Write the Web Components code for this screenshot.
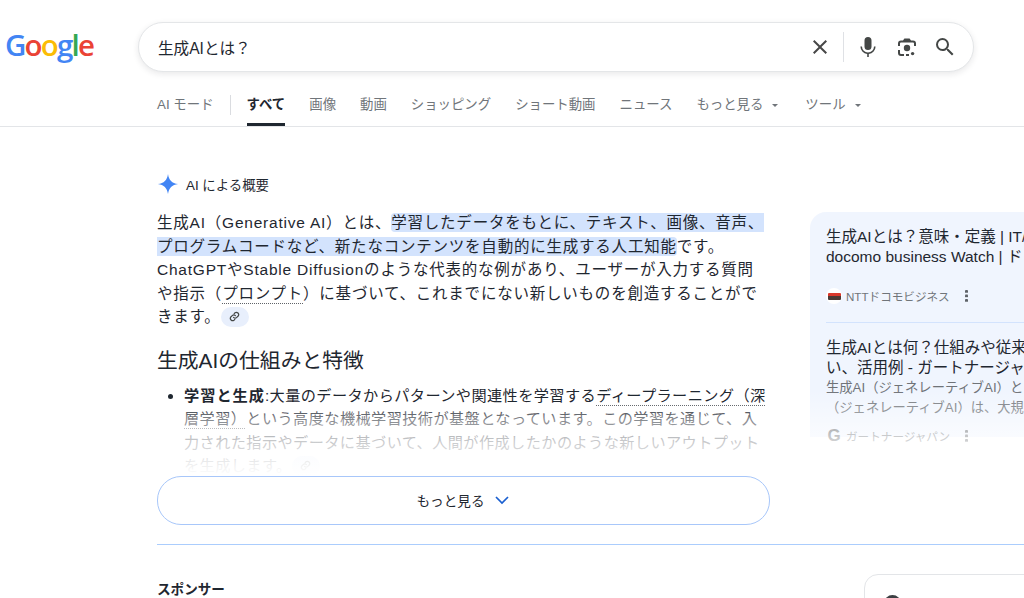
<!DOCTYPE html>
<html lang="ja">
<head>
<meta charset="utf-8">
<title>生成AIとは？</title>
<style>
  html, body { margin: 0; background: #fff; text-spacing-trim: space-all; }
  body { width: 1024px; height: 598px; overflow: hidden; font-family: "Liberation Sans", "Noto Sans CJK JP", sans-serif; color: #1f2730; }
  mark { background: #d3e3fd; color: inherit; border-radius: 4px; padding: 1px 0; }
  u { text-decoration: underline dotted #5f6368 1px; text-underline-offset: 4px; }
  li b { letter-spacing: 1px; }
</style>
</head>
<body>
<search-header query="生成AIとは？"></search-header>
<page-body>
  <ai-overview>
    <p>生成AI（Generative AI）とは、<mark>学習したデータをもとに、テキスト、画像、音声、プログラムコードなど、新たなコンテンツを自動的に生成する人工知能</mark>です。ChatGPTやStable Diffusionのような代表的な例があり、ユーザーが入力する質問や指示（<u>プロンプト</u>）に基づいて、これまでにない新しいものを創造することができます。<link-chip></link-chip></p>
    <h2>生成AIの仕組みと特徴</h2>
    <ul><li><b>学習と生成</b>:大量のデータからパターンや関連性を学習する<u>ディープラーニング（深層学習）</u>という高度な機械学習技術が基盤となっています。この学習を通じて、入力された指示やデータに基づいて、人間が作成したかのような新しいアウトプットを生成します。<link-chip></link-chip></li></ul>
  </ai-overview>
  <source-panel slot="side">
    <source-card site="NTTドコモビジネス" logo="ntt">生成AIとは？意味・定義 | IT/ICT用語集<br>docomo business Watch | ドコモビジネス</source-card>
    <source-card site="ガートナージャパン" logo="g" snippet="生成AI（ジェネレーティブAI）とは何か。<br>（ジェネレーティブAI）は、大規模なデータ">生成AIとは何？仕組みや従来のAIとの違<br>い、活用例 - ガートナージャパン</source-card>
  </source-panel>
</page-body>

<script>
const icons = {
  close: '<path d="M19 6.41 17.59 5 12 10.59 6.41 5 5 6.41 10.59 12 5 17.59 6.41 19 12 13.41 17.59 19 19 17.59 13.41 12z"/>',
  mic: '<path d="M12 15a3.5 3.5 0 0 0 3.5-3.5v-6a3.5 3.5 0 0 0-7 0v6A3.5 3.5 0 0 0 12 15z"/><path d="M18 11.5a6 6 0 0 1-12 0H4.4a7.6 7.6 0 0 0 6.8 7.5V22h1.6v-3a7.6 7.6 0 0 0 6.8-7.5z"/>',
  lens: '<circle cx="12" cy="13" r="3.2"/><circle cx="17.6" cy="18.6" r="1.7"/><path d="M9.4 3.5 8 5.5H6a3 3 0 0 0-3 3V11h2V8.5a1 1 0 0 1 1-1h12a1 1 0 0 1 1 1V11h2V8.5a3 3 0 0 0-3-3h-2l-1.4-2zM3 15v3a3 3 0 0 0 3 3h3v-2H6a1 1 0 0 1-1-1v-3zM11 19h3v2h-3z"/>',
  search: '<path d="M15.5 14h-.79l-.28-.27A6.47 6.47 0 0 0 16 9.5 6.5 6.5 0 1 0 9.5 16c1.61 0 3.09-.59 4.23-1.57l.27.28v.79l5 4.99L20.49 19l-4.99-5zm-6 0C7.01 14 5 11.99 5 9.5S7.01 5 9.5 5 14 7.01 14 9.5 11.99 14 9.5 14z"/>'
};

class SearchHeader extends HTMLElement {
  constructor() {
    super();
    this.attachShadow({ mode: "open" });
  }
  connectedCallback() {
    const q = this.getAttribute("query");
    const icon = (n, s) => `<svg width="${s}" height="${s}" viewBox="0 0 24 24" fill="currentColor">${icons[n]}</svg>`;
    this.shadowRoot.innerHTML = `
    <style>
      :host { display: block; height: 126px; border-bottom: 1px solid #e3e5e8; font-family: "Liberation Sans", "Noto Sans CJK JP", sans-serif; }
      .top { display: flex; align-items: center; height: 50px; padding: 22px 50px 0 5px; }
      .logo { width: 133px; flex: none; font: 600 29.5px/1 "Open Sans", sans-serif; letter-spacing: -1.8px; margin-top: -4px; }
      .box { flex: 1; height: 48px; border: 1px solid #e4e6e8; border-radius: 25px; display: flex; align-items: center; padding-left: 19px; box-shadow: 0 2px 6px rgba(32,33,36,.1); background: #fff; }
      .q { flex: 1; font-size: 15.6px; color: #1f2730; margin-top: -1px; }
      .ic { display: flex; align-items: center; color: #444746; }
      .x { margin-right: 11px; color: #474747; }
      .sep { width: 1px; height: 30px; background: #dfe1e5; margin-right: 12px; }
      .mic { margin-right: 15px; }
      .lens { margin-right: 14px; }
      .search { margin-right: 16px; }
      nav { display: flex; align-items: flex-start; padding-left: 157px; height: 54px; font-size: 13.4px; color: #70757a; }
      nav a { display: flex; flex-direction: column; align-items: center; height: 54px; padding-top: 23px; box-sizing: border-box; line-height: 20px; margin-right: 24px; white-space: nowrap; position: relative; }
      nav a.ai { margin-right: 16px; }
      nav i { width: 1px; height: 20px; background: #dadce0; margin: 23px 16px 0 0; }
      nav a.on { color: #1f2730; font-weight: 700; }
      nav a.on::after { content: ""; position: absolute; left: 0; right: 0; bottom: 0; height: 3px; background: #1f2730; }
      .car { display: inline-block; margin-left: 9px; border: 3px solid transparent; border-top: 3px solid #70757a; border-bottom: 0; vertical-align: 2px; }
      nav a.more { margin-right: 27px; }
    </style>
    <div class="top">
      <div class="logo"><span style="color:#4285f4">G</span><span style="color:#ea4335">o</span><span style="color:#fbbc05">o</span><span style="color:#4285f4">g</span><span style="color:#34a853">l</span><span style="color:#ea4335">e</span></div>
      <div class="box">
        <div class="q">${q}</div>
        <span class="ic x">${icon("close", 24)}</span>
        <span class="sep"></span>
        <span class="ic mic">${icon("mic", 24)}</span>
        <span class="ic lens">${icon("lens", 24)}</span>
        <span class="ic search">${icon("search", 24)}</span>
      </div>
    </div>
    <nav>
      <a class="ai">AI モード</a><i></i>
      <a class="on">すべて</a><a>画像</a><a>動画</a><a>ショッピング</a><a>ショート動画</a><a>ニュース</a>
      <a class="more"><span>もっと見る<span class="car"></span></span></a>
      <a><span>ツール<span class="car"></span></span></a>
    </nav>`;
  }
}
customElements.define("search-header", SearchHeader);

class PageBody extends HTMLElement {
  constructor() {
    super();
    this.attachShadow({ mode: "open" });
    this.shadowRoot.innerHTML = `
    <style>
      :host { display: flex; gap: 40px; padding-left: 157px; }
      .col { flex: none; width: 613px; }
      .side { flex: none; width: 214px; padding-top: 85px; }
    </style>
    <div class="col"><slot></slot></div>
    <div class="side"><slot name="side"></slot></div>`;
  }
}
customElements.define("page-body", PageBody);

class LinkChip extends HTMLElement {
  constructor() {
    super();
    this.attachShadow({ mode: "open" });
    this.shadowRoot.innerHTML = `
    <style>
      :host { display: inline-flex; align-items: center; justify-content: center; width: 28px; height: 20px; border-radius: 10px; background: #e8effc; vertical-align: 0; }
    </style>
    <svg width="11" height="11" viewBox="0 0 24 24" fill="none" stroke="#444746" stroke-width="2.6" stroke-linecap="round"><path d="M10 14a5 5 0 0 0 7 0l3-3a5 5 0 0 0-7-7l-1.5 1.5"/><path d="M14 10a5 5 0 0 0-7 0l-3 3a5 5 0 0 0 7 7l1.5-1.5"/></svg>`;
  }
}
customElements.define("link-chip", LinkChip);

class AiOverview extends HTMLElement {
  constructor() {
    super();
    this.attachShadow({ mode: "open" });
    this.shadowRoot.innerHTML = `
    <style>
      :host { display: block; font-family: "Liberation Sans", "Noto Sans CJK JP", sans-serif; color: #1f2730; }
      .head { display: flex; align-items: center; gap: 7px; height: 24px; margin-top: 45px; font-size: 13.4px; }
      .clip { position: relative; height: 265px; margin-top: 15px; overflow: hidden; }
      .clip::after { content: ""; position: absolute; left: 0; right: 0; top: 193px; height: 72px; background: linear-gradient(rgba(255,255,255,0), rgba(255,255,255,.45) 21%, rgba(255,255,255,.75) 51%, rgba(255,255,255,.93) 85%, #fff); }
      .btn { height: 47px; border: 1px solid #a8c7fa; border-radius: 24px; display: flex; align-items: center; justify-content: center; gap: 10px; font-size: 13.6px; }
      .btn span { margin-top: -1px; }
      .btn svg { margin-top: -2px; }
      .rule { height: 1px; background: #abcdfd; margin-top: 19px; width: 900px; }
      .sp { font-size: 13.6px; font-weight: 700; margin-top: 36px; line-height: 18px; }
      .ad { position: absolute; left: 864px; top: 574px; width: 200px; height: 60px; border: 1px solid #e3e5e8; border-radius: 14px; box-sizing: border-box; }
      .ad::before { content: ""; position: absolute; left: 19px; top: 20px; width: 17px; height: 17px; border-radius: 50%; background: #3c4043; }
      ::slotted(p) { margin: 0; padding-right: 1.5px; font-size: 15.5px; line-height: 23.5px; letter-spacing: .78px; }
      ::slotted(h2) { margin: 18px 0 0; font-size: 20.8px; line-height: 28px; font-weight: 400; }
      ::slotted(ul) { margin: 9px 0 0; padding: 0 0 0 27px; font-size: 15.2px; line-height: 23.5px; letter-spacing: .4px; }
    </style>
    <div class="head">
      <svg width="22" height="22" viewBox="0 0 24 24"><path fill="#4285f4" d="M12 1c.9 6.6 4.4 10.1 11 11-6.6.9-10.1 4.4-11 11-.9-6.6-4.4-10.1-11-11 6.6-.9 10.1-4.4 11-11z"/></svg>
      <span>AI による概要</span>
    </div>
    <div class="clip"><slot></slot></div>
    <div class="btn"><span>もっと見る</span><svg width="16" height="16" viewBox="0 0 16 16" fill="none" stroke="#1a5fd0" stroke-width="1.7"><path d="M2 5l6 6 6-6"/></svg></div>
    <div class="rule"></div>
    <div class="sp">スポンサー</div>
    <div class="ad"></div>`;
  }
}
customElements.define("ai-overview", AiOverview);

class SourcePanel extends HTMLElement {
  constructor() {
    super();
    this.attachShadow({ mode: "open" });
    this.shadowRoot.innerHTML = `
    <style>
      :host { display: block; position: relative; width: 300px; height: 240px; overflow: hidden; background: linear-gradient(#f0f5fe, #f0f5fe) no-repeat 0 0 / 100% 225px; border-radius: 16px 0 0 0; padding-left: 16px; box-sizing: border-box; }
      :host::after { content: ""; position: absolute; left: 0; right: 0; top: 178px; height: 62px; background: linear-gradient(rgba(255,255,255,0), rgba(255,255,255,.85)); }
    </style>
    <slot></slot>`;
  }
}
customElements.define("source-panel", SourcePanel);

class SourceCard extends HTMLElement {
  constructor() {
    super();
    this.attachShadow({ mode: "open" });
  }
  connectedCallback() {
    const snip = this.getAttribute("snippet");
    const site = this.getAttribute("site");
    const g = this.getAttribute("logo") === "g";
    this.shadowRoot.innerHTML = `
    <style>
      :host { display: block; padding-top: 15px; box-sizing: border-box; font-family: "Liberation Sans", "Noto Sans CJK JP", sans-serif; }
      :host(:not(:last-child)) { height: 111px; border-bottom: 1px solid #d3e3fd; }
      .t { font-size: 15.5px; line-height: 19.6px; color: #1f2730; white-space: nowrap; }
      .s { font-size: 13.3px; line-height: 19.5px; color: #6f7378; margin-top: 1px; white-space: nowrap; }
      .m { display: flex; align-items: center; font-size: 11.6px; color: #70757a; height: 20px; margin-top: ${snip ? 9 : 20}px; }
      .fav { width: 16px; height: 16px; margin-right: 4px; flex: none; display: flex; align-items: center; justify-content: center; background: ${g ? "none" : "#fff"}; border-radius: 50%; }
      .g { font: 700 17px/16px "Liberation Sans", sans-serif; color: #5f6368; }
      .ntt { width: 13px; height: 7px; background: linear-gradient(#d9382c 50%, #4a3a35 50%); border-radius: 1px; }
      .dots { margin-left: 15px; width: 3px; height: 12px; background: radial-gradient(circle at 1.5px 1.5px, #5f6368 1.4px, transparent 1.6px) 0 0 / 3px 4.5px; }
    </style>
    <div class="t"><slot></slot></div>
    ${snip ? `<div class="s">${snip}</div>` : ""}
    <div class="m"><span class="fav">${g ? '<span class="g">G</span>' : '<span class="ntt"></span>'}</span><span>${site}</span><span class="dots"></span></div>`;
  }
}
customElements.define("source-card", SourceCard);
</script>
</body>
</html>
